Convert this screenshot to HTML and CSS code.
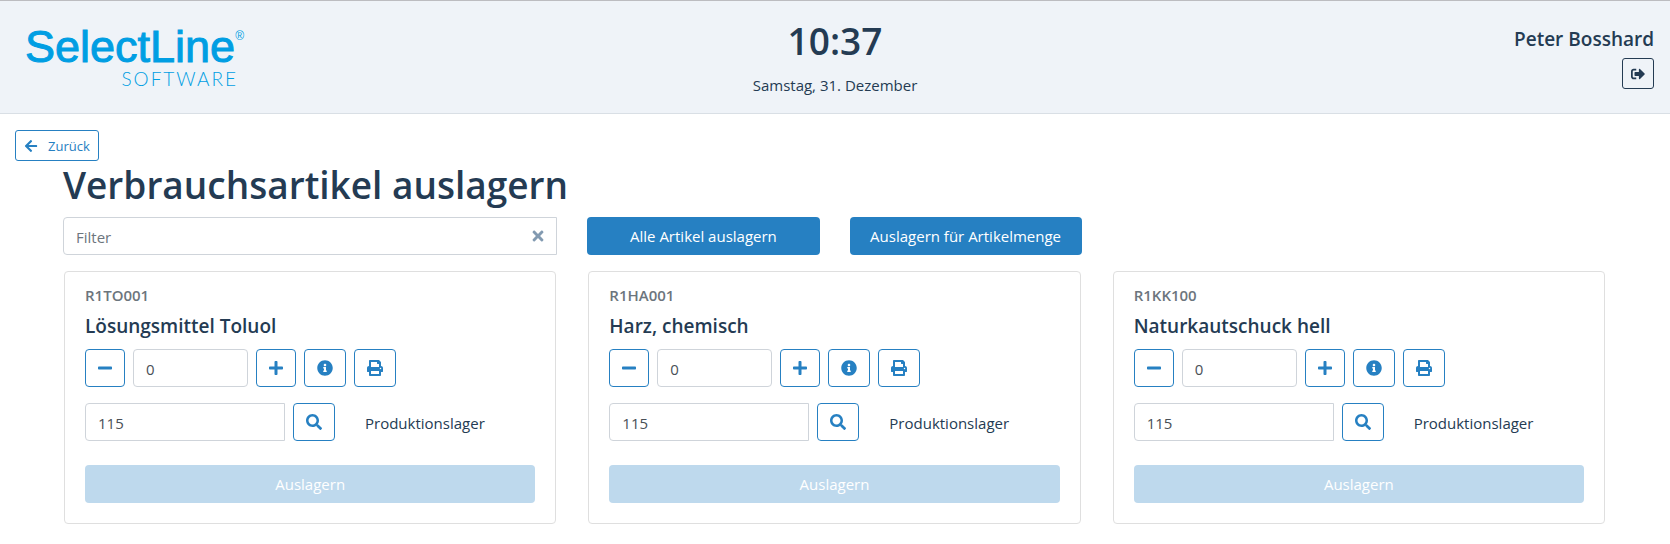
FILE: index.html
```html
<!DOCTYPE html>
<html lang="de">
  <head>
    <meta charset="UTF-8" />
    <meta name="viewport" content="width=device-width, initial-scale=1.0" />
    <title>Verbrauchsartikel auslagern</title>
    <link rel="stylesheet" href="styles.css">
  </head>
  <body>
    <svg class="sprite" aria-hidden="true">
      <symbol id="arrow-left" viewBox="0 0 448 512"><path d="M257.500 445.100l-22.200 22.200c-9.400 9.400-24.600 9.400-33.900 0L7 273c-9.400-9.400-9.400-24.600 0-33.900L201.400 44.700c9.400-9.400 24.600-9.400 33.900 0l22.200 22.200c9.500 9.500 9.300 25-.4 34.300L136.600 216H424c13.300 0 24 10.700 24 24v32c0 13.300-10.700 24-24 24H136.600l120.500 114.800c9.800 9.300 10 24.800.4 34.300z"/></symbol>
      <symbol id="sign-out" viewBox="0 0 512 512"><path d="M497 273L329 441c-15 15-41 4.500-41-17v-96H152c-13.300 0-24-10.700-24-24v-96c0-13.300 10.700-24 24-24h136V88c0-21.400 25.900-32 41-17l168 168c9.300 9.400 9.300 24.600 0 34zM192 436v-40c0-6.600-5.400-12-12-12H96c-17.700 0-32-14.300-32-32V160c0-17.700 14.300-32 32-32h84c6.600 0 12-5.400 12-12V76c0-6.600-5.400-12-12-12H96c-53 0-96 43-96 96v192c0 53 43 96 96 96h84c6.600 0 12-5.400 12-12z"/></symbol>
      <symbol id="times" viewBox="0 0 352 512"><path d="M242.720 256l100.070-100.070c12.280-12.280 12.280-32.190 0-44.480l-22.240-22.240c-12.280-12.280-32.190-12.280-44.480 0L176 189.280 75.930 89.210c-12.280-12.280-32.190-12.280-44.480 0L9.210 111.450c-12.280 12.280-12.280 32.190 0 44.480L109.280 256 9.210 356.070c-12.280 12.280-12.280 32.190 0 44.480l22.240 22.240c12.280 12.280 32.200 12.280 44.480 0L176 322.720l100.070 100.070c12.280 12.280 32.200 12.280 44.480 0l22.240-22.240c12.280-12.280 12.280-32.190 0-44.480L242.720 256z"/></symbol>
      <symbol id="minus" viewBox="0 0 448 512"><path d="M416 208H32c-17.670 0-32 14.330-32 32v32c0 17.670 14.330 32 32 32h384c17.670 0 32-14.330 32-32v-32c0-17.670-14.330-32-32-32z"/></symbol>
      <symbol id="plus" viewBox="0 0 448 512"><path d="M416 208H272V64c0-17.670-14.330-32-32-32h-32c-17.670 0-32 14.330-32 32v144H32c-17.670 0-32 14.330-32 32v32c0 17.670 14.330 32 32 32h144v144c0 17.670 14.330 32 32 32h32c17.670 0 32-14.330 32-32V304h144c17.670 0 32-14.330 32-32v-32c0-17.670-14.330-32-32-32z"/></symbol>
      <symbol id="info" viewBox="0 0 512 512"><path d="M256 8C119.043 8 8 119.083 8 256c0 136.997 111.043 248 248 248s248-111.003 248-248C504 119.083 392.957 8 256 8zm0 110c23.196 0 42 18.804 42 42s-18.804 42-42 42-42-18.804-42-42 18.804-42 42-42zm56 254c0 6.627-5.373 12-12 12h-88c-6.627 0-12-5.373-12-12v-24c0-6.627 5.373-12 12-12h12v-64h-12c-6.627 0-12-5.373-12-12v-24c0-6.627 5.373-12 12-12h64c6.627 0 12 5.373 12 12v100h12c6.627 0 12 5.373 12 12v24z"/></symbol>
      <symbol id="print" viewBox="0 0 512 512"><path d="M448 192V77.250c0-8.490-3.370-16.620-9.370-22.630L393.370 9.370c-6-6-14.140-9.370-22.630-9.370H96C78.330 0 64 14.330 64 32v160c-35.350 0-64 28.650-64 64v112c0 8.840 7.160 16 16 16h48v96c0 17.670 14.330 32 32 32h320c17.670 0 32-14.330 32-32v-96h48c8.840 0 16-7.160 16-16V256c0-35.350-28.650-64-64-64zm-64 256H128v-96h256v96zm0-224H128V64h192v48c0 8.840 7.160 16 16 16h48v96zm48 72c-13.250 0-24-10.750-24-24 0-13.260 10.750-24 24-24s24 10.740 24 24c0 13.250-10.750 24-24 24z"/></symbol>
      <symbol id="search" viewBox="0 0 512 512"><path d="M505 442.700L405.300 343c-4.500-4.500-10.600-7-17-7H372c27.600-35.300 44-79.700 44-128C416 93.100 322.900 0 208 0S0 93.100 0 208s93.100 208 208 208c48.300 0 92.700-16.400 128-44v16.300c0 6.400 2.500 12.500 7 17l99.700 99.700c9.400 9.400 24.600 9.400 33.900 0l28.300-28.300c9.400-9.400 9.400-24.600.1-34zM208 336c-70.700 0-128-57.200-128-128 0-70.700 57.200-128 128-128 70.700 0 128 57.200 128 128 0 70.700-57.200 128-128 128z"/></symbol>
    </svg>

    <header class="header">
      <div class="logo">
        <div class="logo-name">SelectLine<sup class="logo-mark">®</sup></div>
        <div class="logo-sub">SOFTWARE</div>
      </div>
      <div class="clock">
        <div class="time">10:37</div>
        <div class="date">Samstag, 31. Dezember</div>
      </div>
      <div class="user">
        <div class="user-name">Peter Bosshard</div>
        <button class="btn-small logout" aria-label="Abmelden"><svg class="icon"><use href="#sign-out"/></svg></button>
      </div>
    </header>

    <main>
      <button class="btn-small back"><svg class="icon"><use href="#arrow-left"/></svg>Zurück</button>

      <h1>Verbrauchsartikel auslagern</h1>

      <div class="toolbar">
        <div class="filter">
          <input type="text" class="field" placeholder="Filter" aria-label="Filter" />
          <button class="filter-clear" aria-label="Filter leeren"><svg class="icon"><use href="#times"/></svg></button>
        </div>
        <button class="btn-primary">Alle Artikel auslagern</button>
        <button class="btn-primary">Auslagern für Artikelmenge</button>
      </div>

      <div class="cards">
        <section class="card">
          <h3>R1TO001</h3>
          <h2>Lösungsmittel Toluol</h2>
          <div class="row">
            <button class="btn step" aria-label="Weniger"><svg class="icon"><use href="#minus"/></svg></button>
            <input type="text" class="field amount" value="0" aria-label="Menge" />
            <button class="btn step" aria-label="Mehr"><svg class="icon"><use href="#plus"/></svg></button>
            <button class="btn" aria-label="Info"><svg class="icon"><use href="#info"/></svg></button>
            <button class="btn" aria-label="Drucken"><svg class="icon"><use href="#print"/></svg></button>
          </div>
          <div class="row">
            <input type="text" id="lager1" class="field store" value="115" />
            <button class="btn" aria-label="Lager suchen"><svg class="icon"><use href="#search"/></svg></button>
            <label for="lager1">Produktionslager</label>
          </div>
          <button class="btn-primary" disabled>Auslagern</button>
        </section>

        <section class="card">
          <h3>R1HA001</h3>
          <h2>Harz, chemisch</h2>
          <div class="row">
            <button class="btn step" aria-label="Weniger"><svg class="icon"><use href="#minus"/></svg></button>
            <input type="text" class="field amount" value="0" aria-label="Menge" />
            <button class="btn step" aria-label="Mehr"><svg class="icon"><use href="#plus"/></svg></button>
            <button class="btn" aria-label="Info"><svg class="icon"><use href="#info"/></svg></button>
            <button class="btn" aria-label="Drucken"><svg class="icon"><use href="#print"/></svg></button>
          </div>
          <div class="row">
            <input type="text" id="lager2" class="field store" value="115" />
            <button class="btn" aria-label="Lager suchen"><svg class="icon"><use href="#search"/></svg></button>
            <label for="lager2">Produktionslager</label>
          </div>
          <button class="btn-primary" disabled>Auslagern</button>
        </section>

        <section class="card">
          <h3>R1KK100</h3>
          <h2>Naturkautschuck hell</h2>
          <div class="row">
            <button class="btn step" aria-label="Weniger"><svg class="icon"><use href="#minus"/></svg></button>
            <input type="text" class="field amount" value="0" aria-label="Menge" />
            <button class="btn step" aria-label="Mehr"><svg class="icon"><use href="#plus"/></svg></button>
            <button class="btn" aria-label="Info"><svg class="icon"><use href="#info"/></svg></button>
            <button class="btn" aria-label="Drucken"><svg class="icon"><use href="#print"/></svg></button>
          </div>
          <div class="row">
            <input type="text" id="lager3" class="field store" value="115" />
            <button class="btn" aria-label="Lager suchen"><svg class="icon"><use href="#search"/></svg></button>
            <label for="lager3">Produktionslager</label>
          </div>
          <button class="btn-primary" disabled>Auslagern</button>
        </section>
      </div>
    </main>
  </body>
</html>
```
FILE: styles.css
```css
* {
  box-sizing: border-box;
}
body {
  margin: 0;
  font-family: "Open Sans", "Noto Sans", sans-serif;
  font-size: 15px;
  line-height: 24px;
  color: #243b53;
  background-color: #fff;
}
button,
input {
  font: inherit;
  margin: 0;
}
button {
  display: flex;
  align-items: center;
  justify-content: center;
  padding: 0;
  border-radius: 4px;
  cursor: pointer;
}
h1,
h2,
h3 {
  margin: 0;
  font-weight: 600;
}
.sprite {
  display: none;
}
.icon {
  width: 16px;
  height: 16px;
  fill: currentColor;
}

/* Header */
.header {
  display: grid;
  grid-template-columns: 1fr 1fr 1fr;
  padding: 16px;
  border-top: 1px solid #bcbcc0;
  border-bottom: 1px solid #d9dfe5;
  background-color: #eff3f8;
}
.logo {
  justify-self: start;
  padding: 8px 0 0 9px;
  color: #009ee3;
}
.logo-name {
  font-family: "Liberation Sans", Arial, sans-serif;
  font-size: 45px;
  line-height: 44px;
  -webkit-text-stroke: 1px #009ee3;
}
.logo-mark {
  font-size: 12px;
  line-height: 12px;
  vertical-align: 22px;
  -webkit-text-stroke: 0;
}
.logo-sub {
  padding-right: 6px;
  font-family: Lato, sans-serif;
  font-size: 19px;
  line-height: 20px;
  font-weight: 300;
  letter-spacing: 2px;
  text-align: right;
}
.clock {
  text-align: center;
}
.time {
  font-size: 37px;
  line-height: 48px;
  font-weight: 600;
}
.date {
  margin-top: 8px;
}
.user {
  display: flex;
  flex-direction: column;
  align-items: flex-end;
  padding-top: 10px;
}
.user-name {
  font-size: 19px;
  line-height: 24px;
  font-weight: 600;
  margin-bottom: 7px;
}

/* Buttons */
.btn-small {
  height: 31px;
  padding: 0 8px;
  border: 1px solid #2680c2;
  border-radius: 3px;
  font-size: 13px;
  color: #2680c2;
  background-color: transparent;
}
.btn-small .icon {
  width: 14px;
  height: 14px;
}
.logout {
  border-color: #243b53;
  color: #243b53;
}
.back {
  gap: 10px;
}
.btn {
  width: 42px;
  height: 38px;
  border: 1px solid #2680c2;
  color: #2680c2;
  background-color: #fff;
}
.step {
  width: 40px;
}
.btn-primary {
  width: 100%;
  height: 38px;
  border: none;
  color: #fff;
  background-color: #2680c2;
}
.btn-primary:disabled {
  background-color: #bed9ed;
  cursor: default;
}

/* Inputs */
.field {
  height: 38px;
  padding: 2px 12px 0;
  border: 1px solid #cfd4da;
  border-radius: 4px;
  color: #495057;
  background-color: #fff;
}
.field::placeholder {
  color: #6c757d;
}

main {
  padding: 16px 15px 20px;
}
h1 {
  padding: 0 48px;
  font-size: 37px;
  line-height: 48px;
}
.toolbar {
  display: grid;
  grid-template-columns: repeat(6, 1fr);
  gap: 30px;
  margin: 8px 49px 16px 48px;
}
.filter {
  position: relative;
  grid-column: span 2;
}
.filter .field {
  width: 100%;
  border-radius: 4px 0 0 4px;
}
.filter-clear {
  position: absolute;
  top: 0;
  right: 0;
  width: 38px;
  height: 38px;
  border: none;
  color: #829ab1;
  background-color: transparent;
}

/* Article cards */
.cards {
  display: grid;
  grid-template-columns: repeat(3, 1fr);
  gap: 32px;
  margin: 0 50px 0 49px;
}
.card {
  padding: 13px 20px 20px;
  border: 1px solid #dfdfdf;
  border-radius: 4px;
}
.card h3 {
  font-size: 15px;
  line-height: 20px;
  color: #6c757d;
}
.card h2 {
  margin: 9px 0 11px;
  font-size: 19px;
  line-height: 24px;
}
.row {
  display: flex;
  align-items: center;
  gap: 8px;
  margin-bottom: 16px;
}
.row + .row {
  margin-bottom: 24px;
}
.amount {
  width: 115px;
}
.store {
  width: 200px;
  border-radius: 4px 0 0 4px;
}
.row label {
  padding: 2px 0 0 22px;
}
```
